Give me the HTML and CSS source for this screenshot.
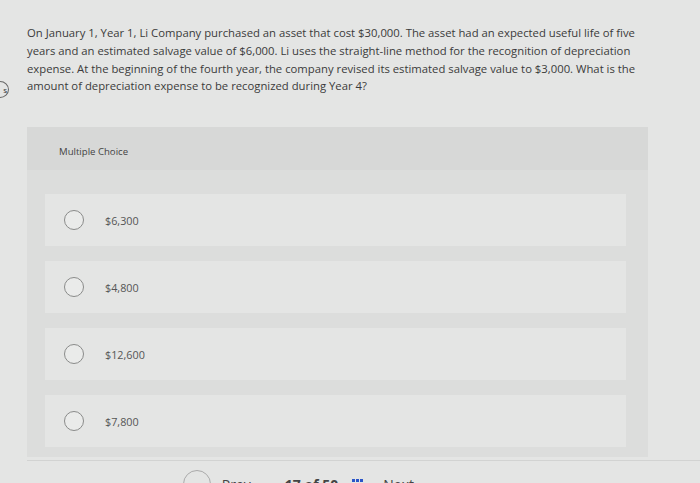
FILE: index.html
```html
<!DOCTYPE html>
<html>
<head>
<meta charset="utf-8">
<link rel="stylesheet" href="styles.css">
</head>
<body>
<div class="page">
  <span class="side-badge">s</span>
  <p class="question">On January 1, Year 1, Li Company purchased an asset that cost $30,000. The asset had an expected useful life of five<br>years and an estimated salvage value of $6,000. Li uses the straight-line method for the recognition of depreciation<br>expense. At the beginning of the fourth year, the company revised its estimated salvage value to $3,000. What is the<br>amount of depreciation expense to be recognized during Year 4?</p>
  <div class="mc">
    <div class="mc-header">Multiple Choice</div>
    <div class="mc-options">
      <div class="option"><span class="radio"></span><span class="label">$6,300</span></div>
      <div class="option"><span class="radio"></span><span class="label">$4,800</span></div>
      <div class="option"><span class="radio"></span><span class="label">$12,600</span></div>
      <div class="option"><span class="radio"></span><span class="label">$7,800</span></div>
    </div>
  </div>
  <div class="footer">
    <span class="footer-ring"></span>
    <span class="nav">&#8249; Prev</span>
    <span class="count">17 of 50</span>
    <span class="grid-icon"><i></i><i></i><i></i><i></i><i></i><i></i></span>
    <span class="nav">Next &#8250;</span>
  </div>
</div>
</body>
</html>
```
FILE: styles.css
```css
html, body {
  margin: 0;
  padding: 0;
}
body {
  background: #e4e5e4;
  font-family: "Open Sans", Lato, sans-serif;
  width: 700px;
  height: 483px;
  overflow: hidden;
}
.page {
  position: relative;
  padding-left: 27px;
}
.side-badge {
  position: absolute;
  left: -9px;
  top: 81px;
  width: 15px;
  height: 15px;
  border: 1px solid #666;
  border-radius: 50%;
  font-size: 8px;
  line-height: 15px;
  text-align: right;
  padding-right: 1px;
  color: #333;
  box-sizing: content-box;
}
.question {
  margin: 0;
  padding-top: 24px;
  width: 660px;
  white-space: nowrap;
  font-size: 11.3px;
  line-height: 17.8px;
  color: #3b3b3b;
}
.mc {
  margin-top: 32px;
  width: 621px;
  background: #dcdddc;
  padding-bottom: 10px;
}
.mc-header {
  height: 43px;
  background: #d7d8d7;
  padding-left: 32px;
  box-sizing: border-box;
  padding-top: 18px;
  font-size: 9.6px;
  color: #444;
}
.mc-options {
  padding: 24px 22px 0 18px;
  display: flex;
  flex-direction: column;
  gap: 15px;
}
.option {
  height: 52px;
  background: #e4e5e4;
  display: flex;
  align-items: center;
  padding-left: 19px;
}
.radio {
  width: 18px;
  height: 18px;
  border: 1.5px solid #8a8b8a;
  border-radius: 50%;
  background: #eaebea;
  flex: none;
}
.label {
  margin-left: 21px;
  font-size: 10.8px;
  color: #555;
}
.footer {
  margin-top: 3px;
  border-top: 1px solid #d2d3d2;
  height: 30px;
  display: flex;
  align-items: flex-start;
  padding-left: 155px;
  padding-top: 14px;
  box-sizing: border-box;
  gap: 14px;
  font-size: 14px;
  color: #444;
  position: relative;
}
.footer-ring {
  position: absolute;
  left: 156px;
  top: 9px;
  width: 26px;
  height: 26px;
  border: 1px solid #aaa;
  border-radius: 50%;
}
.nav {
  margin-left: 32px;
}
.count {
  font-weight: bold;
  margin-left: 20px;
}
.grid-icon {
  display: grid;
  grid-template-columns: repeat(3, 3px);
  gap: 1px;
  margin-top: 4px;
}
.grid-icon i {
  width: 3px;
  height: 3px;
  background: #2a55c8;
}
.grid-icon + .nav {
  margin-left: 6px;
}
```
